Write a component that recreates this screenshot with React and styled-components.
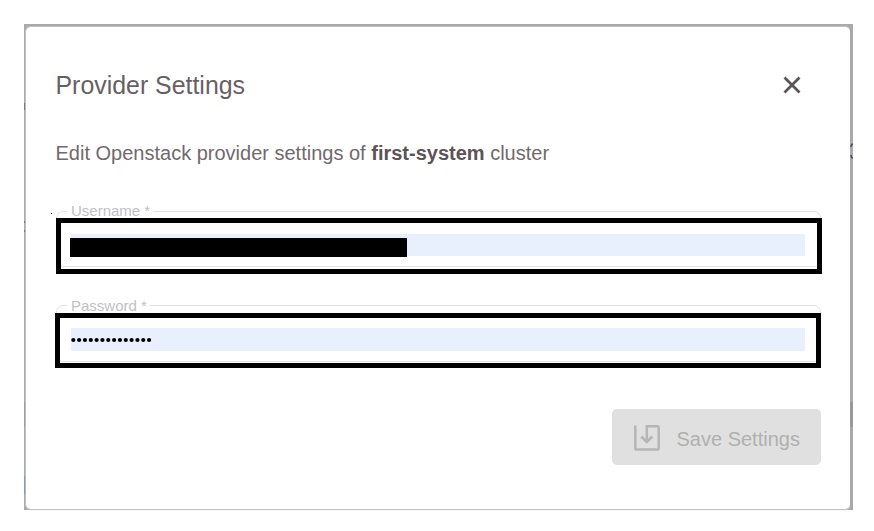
import React from "react";
import styled, { createGlobalStyle } from "styled-components";

const GlobalStyle = createGlobalStyle`
  * { box-sizing: border-box; }
  body {
    margin: 0;
    background: #fff;
    font-family: "Liberation Sans", Arial, sans-serif;
    color: #685f63;
  }
`;

const Page = styled.main`
  height: 531px;
  padding: 24px 21px 21px 24px;
`;

const Backdrop = styled.div`
  display: flex;
  height: 486px;
  padding: 3px 0 1px;
  background: #a9a9a9;
`;

const LeftRail = styled.div`
  flex: 0 0 1.5px;
  background: linear-gradient(
    #a9a9a9 76px, #777279 76px 83px, #a9a9a9 83px 194px,
    #746f72 194px 196px, #a9a9a9 196px 203px, #746f72 203px 205px,
    #a9a9a9 205px 375px, #999 375px 400px, #a9a9a9 400px 449px,
    #739cb0 449px 467px, #a9a9a9 467px
  );
`;

const RightRail = styled.div`
  flex: 0 0 2px;
  padding-top: 116px;
  background: linear-gradient(#a9a9a9 375px, #999 375px 400px, #a9a9a9 400px);
  svg { display: block; }
`;

const Dialog = styled.section`
  flex: 1;
  min-width: 0;
  display: flex;
  flex-direction: column;
  padding: 43px 29.5px 0 30px;
  background: #fff;
  border-radius: 5px;
  box-shadow: 0 0 1px 0.5px #c4c4c4;
`;

const Header = styled.header`
  display: flex;
  justify-content: space-between;
  align-items: center;
  height: 30px;
  padding-right: 19.5px;
`;

const Title = styled.h1`
  margin: 0;
  font-size: 24.9px;
  line-height: 30px;
  font-weight: 400;
`;

const CloseButton = styled.button`
  display: flex;
  padding: 0;
  border: 0;
  background: none;
`;

const Description = styled.p`
  margin: 41px 0 38px;
  font-size: 20px;
  line-height: 24px;
  white-space: nowrap;
  color: #71696d;
  strong { color: #5c5357; }
`;

const Form = styled.form`
  display: flex;
  flex-direction: column;
  gap: 23px;
`;

const Field = styled.div`
  display: grid;
  align-items: start;
  > * { grid-area: 1 / 1; }
`;

const Outline = styled.fieldset`
  min-width: 0;
  width: 765px;
  height: ${(p) => p.$height}px;
  margin: 0 0 0 0.5px;
  padding: 0;
  border: 1px solid #e2e2e2;
  border-radius: 7px;
`;

const Legend = styled.legend`
  height: 16px;
  margin-left: 10px;
  padding: 0 3px 0 4px;
  font-size: 15px;
  line-height: ${(p) => p.$line || 16}px;
  color: #bfc0c6;
`;

const UsernameBox = styled.div`
  width: 766px;
  height: 56px;
  margin: 15px 0 0 0.5px;
  padding: 11px 11px 0 10px;
  border: 5px solid #000;
`;

const PasswordBox = styled(UsernameBox)`
  height: 55px;
  margin: 16px 0 0 -0.5px;
  padding: 10px 11px 0 11px;
`;

const InputArea = styled.div`
  display: flex;
  width: 734px;
  height: ${(p) => p.$h}px;
  background: #e8f0fe;
`;

const Redaction = styled.div`
  width: 337px;
  height: 19px;
  margin: 4px 0 0 -1px;
  background: #000;
`;

const DotsDrawing = styled.svg`
  display: block;
`;

const Speck = styled.span`
  width: 1px;
  height: 1px;
  margin: 10px 0 0 -4.5px;
  background: #000;
`;

const Footer = styled.footer`
  display: flex;
  justify-content: flex-end;
  margin-top: 41px;
`;

const SaveButton = styled.button`
  display: flex;
  align-items: center;
  width: 209px;
  height: 56px;
  padding: 2px 0 0 22px;
  gap: 17px;
  border: 0;
  border-radius: 5px;
  background: #e0e0e0;
  color: #b0b0b0;
  font: 20px/24px "Liberation Sans", Arial, sans-serif;
  white-space: nowrap;
`;

const ButtonLabel = styled.span`
  padding-top: 2px;
`;

function SaveIcon() {
  return (
    <svg width="26" height="26" viewBox="0 0 26 26" fill="none" stroke="#b7b5b6" strokeWidth="2.5">
      <path d="M1.3 0.5v22.4q0 1.6 1.6 1.6h20.2q1.6 0 1.6-1.6V2.9q0-1.6-1.6-1.6H12.8V17" />
      <path d="M7.3 11.5l5.5 5.4 5.5-5.4" strokeWidth="2.8" />
    </svg>
  );
}

function CloseIcon() {
  return (
    <svg width="18" height="18" viewBox="0 0 18 18" stroke="#5d5357" strokeWidth="2.8">
      <path d="M1.5 1.5l15 15M16.5 1.5l-15 15" />
    </svg>
  );
}

function PasswordDots() {
  return (
    <DotsDrawing width="84" height="23" viewBox="0 0 84 23">
      {Array.from({ length: 14 }, (_, i) => (
        <circle key={i} cx={2.3 + i * 5.83} cy="12" r="2.1" />
      ))}
    </DotsDrawing>
  );
}

export default function App() {
  return (
    <>
      <GlobalStyle />
      <Page>
        <Backdrop>
          <LeftRail />
          <Dialog>
            <Header>
              <Title>Provider Settings</Title>
              <CloseButton aria-label="Close"><CloseIcon /></CloseButton>
            </Header>
            <Description>
              Edit Openstack provider settings of <strong>first-system</strong> cluster
            </Description>
            <Form>
              <Field>
                <Outline $height={64}><Legend>Username *</Legend></Outline>
                <Speck />
                <UsernameBox>
                  <InputArea $h={22}><Redaction /></InputArea>
                </UsernameBox>
              </Field>
              <Field>
                <Outline $height={65}><Legend $line={18}>Password *</Legend></Outline>
                <PasswordBox>
                  <InputArea $h={23}><PasswordDots /></InputArea>
                </PasswordBox>
              </Field>
            </Form>
            <Footer>
              <SaveButton type="button" disabled>
                <SaveIcon />
                <ButtonLabel>Save Settings</ButtonLabel>
              </SaveButton>
            </Footer>
          </Dialog>
          <RightRail>
            <svg width="3" height="16" viewBox="0 0 3 16" fill="none" stroke="#4d5362" strokeWidth="1.5">
              <path d="M3 1Q1 1 1 4M1 12Q1 15 3 15" />
            </svg>
          </RightRail>
        </Backdrop>
      </Page>
    </>
  );
}
